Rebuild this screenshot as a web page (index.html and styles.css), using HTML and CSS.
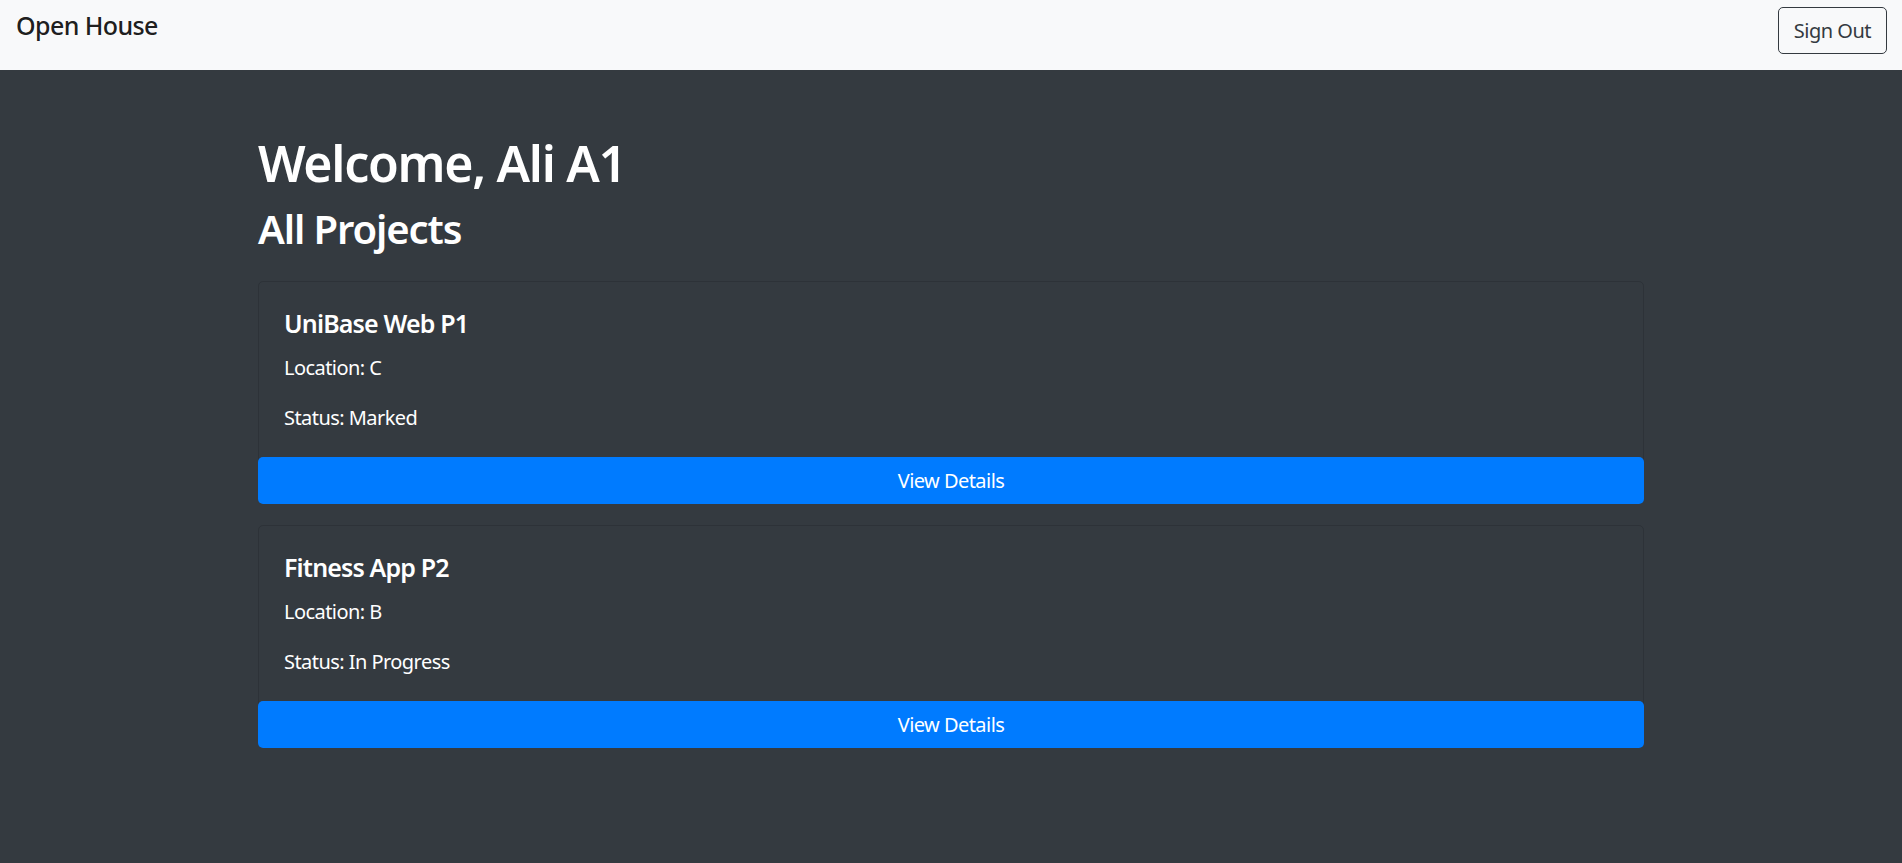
FILE: index.html
```html
<!DOCTYPE html>
<html lang="en">
<head>
<meta charset="utf-8">
<title>Open House</title>
<link rel="stylesheet" href="styles.css">
</head>
<body>
<nav class="navbar">
  <a class="brand" href="#">Open House</a>
  <button class="btn-outline" type="button">Sign Out</button>
</nav>
<main class="container">
  <h1 class="title">Welcome, Ali A1</h1>
  <h2 class="subtitle">All Projects</h2>
  <div class="project-list">
    <div class="card">
      <div class="card-body">
        <h5 class="card-title">UniBase Web P1</h5>
        <p class="card-text">Location: C</p>
        <p class="card-text last">Status: Marked</p>
      </div>
      <a class="btn-view" href="#">View Details</a>
    </div>
    <div class="card">
      <div class="card-body">
        <h5 class="card-title">Fitness App P2</h5>
        <p class="card-text">Location: B</p>
        <p class="card-text last">Status: In Progress</p>
      </div>
      <a class="btn-view" href="#">View Details</a>
    </div>
  </div>
</main>
</body>
</html>
```

FILE: styles.css
```css
* { box-sizing: border-box; }

html, body {
  margin: 0;
  padding: 0;
}

body {
  background: #343a40;
  min-height: 100vh;
  font-family: "Noto Sans", "Open Sans", sans-serif;
  font-size: 20px;
  line-height: 1.5;
  color: #fff;
  letter-spacing: -0.55px;
}

.navbar {
  height: 70px;
  background: #f8f9fa;
  display: flex;
  justify-content: space-between;
  align-items: flex-start;
  padding: 7px 15px 0 16px;
}

.brand {
  font-size: 25px;
  font-weight: 500;
  line-height: 37.5px;
  color: rgba(0, 0, 0, 0.9);
  text-decoration: none;
  letter-spacing: -0.6px;
}

.btn-outline {
  font-family: inherit;
  font-size: 20px;
  letter-spacing: -0.5px;
  line-height: 30px;
  padding: 8px 15px 7px;
  color: #343a40;
  background: transparent;
  border: 1px solid #343a40;
  border-radius: 5px;
  cursor: pointer;
}

.container {
  width: 1386px;
  margin: 0 auto;
  padding-top: 63px;
}

.title {
  font-size: 50px;
  font-weight: 600;
  line-height: 60px;
  letter-spacing: -1.3px;
  margin: 0 0 12px;
}

.subtitle {
  font-size: 40px;
  font-weight: 600;
  line-height: 48px;
  letter-spacing: -1.1px;
  margin: 0 0 28px;
}

.project-list {
  display: flex;
  flex-direction: column;
  gap: 21px;
}

.card {
  border: 1px solid rgba(0, 0, 0, 0.125);
  border-radius: 5px;
  display: flex;
  flex-direction: column;
}

.card-body {
  padding: 26px 25px 24px;
}

.card-title {
  font-size: 25px;
  font-weight: 600;
  line-height: 30px;
  letter-spacing: -0.85px;
  margin: 0 0 15px;
}

.card-text {
  margin: 0 0 20px;
  line-height: 30px;
}

.card-text.last {
  margin-bottom: 0;
}

.btn-view {
  display: block;
  margin: 0 -1px -1px;
  background: #007bff;
  color: #fff;
  text-align: center;
  text-decoration: none;
  font-size: 20px;
  line-height: 30px;
  padding: 9px 15px 8px;
  border-radius: 5px;
}
```
